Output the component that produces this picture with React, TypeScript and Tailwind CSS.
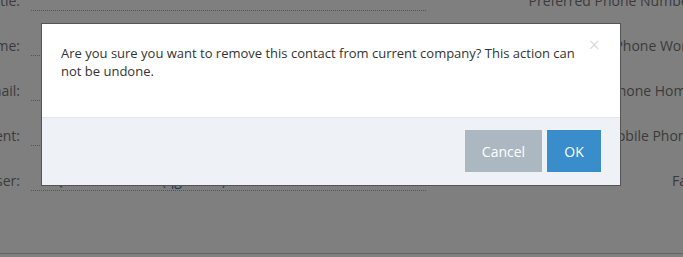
import React from 'react';

const leftRows = ['Title:', 'Name:', 'Email:', 'Department:', 'User:'];
const rightRows = ['Preferred Phone Number:', 'Phone Work:', 'Phone Home:', 'Mobile Phone:', 'Fax:'];

const App = () => {
  return (
    <div className="relative h-[257px] w-[683px] overflow-hidden bg-white" style={{ fontFamily: '"Open Sans", sans-serif' }}>
      {/* page behind the dialog */}
      <div className="-mt-[34px] flex h-[288px] w-[770px] border-b border-[#c8c8c8]">
        <div className="flex w-[426px] flex-col">
          {leftRows.map((label, i) => (
            <div key={label} className="flex h-[45px] items-end">
              <div className="flex h-[22px] w-[20px] shrink-0 items-center justify-end whitespace-nowrap text-[14px] text-[#777]">{label}</div>
              <div className="ml-[11px] flex h-[22px] flex-1 items-center border-b border-dotted border-[#aaa]">
                {i === 4 && <span className="ml-[22px] text-[14px] text-[#2a7ab8]">Quinlan Gordon (qgordon)</span>}
              </div>
            </div>
          ))}
        </div>
        <div className="flex w-[272px] flex-col">
          {rightRows.map((label) => (
            <div key={label} className="flex h-[45px] items-end justify-end">
              <div className="flex h-[22px] items-center whitespace-nowrap text-[14px] text-[#777]">{label}</div>
            </div>
          ))}
        </div>
      </div>

      {/* overlay */}
      <div className="absolute inset-0 bg-black/50" />

      {/* dialog */}
      <div className="absolute left-[41px] top-[23px] w-[580px] border border-[#555] bg-white">
        <div className="relative h-[93px] pl-[19px] pr-[40px] pt-[20px]">
          <p className="text-[13px] leading-[18px] text-[#333]">
            Are you sure you want to remove this contact from current company? This action can not be undone.
          </p>
          <button className="absolute right-[20px] top-[11px] text-[20px] font-light leading-none text-[#cfcfcf]">×</button>
        </div>
        <div className="flex h-[68px] items-start justify-end gap-[5px] border-t border-[#e2e6ea] bg-[#eef1f5] pr-[19px] pt-[12px]">
          <button className="h-[42px] w-[77px] bg-[#abb8c2] text-[14px] text-white">Cancel</button>
          <button className="h-[42px] w-[54px] bg-[#3a8dcb] text-[14px] text-white">OK</button>
        </div>
      </div>
    </div>
  );
};

export default App;
